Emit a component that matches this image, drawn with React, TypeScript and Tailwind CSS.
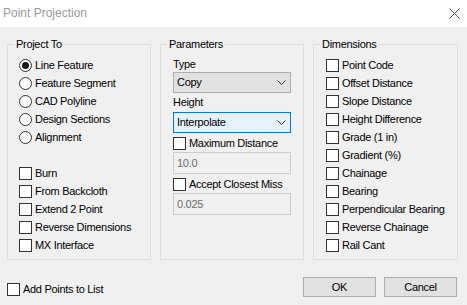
function CheckBox({ label }: { label: string }) {
  return (
    <div className="flex h-[18px] items-center gap-[3px]">
      <span className="h-[13px] w-[13px] shrink-0 border border-[#333] bg-white" />
      <span>{label}</span>
    </div>
  );
}

function Radio({ label, checked }: { label: string; checked?: boolean }) {
  return (
    <div className="flex h-[18px] items-center gap-[3px]">
      <span className="flex h-[13px] w-[13px] shrink-0 items-center justify-center rounded-full border border-[#333] bg-white">
        {checked && <span className="h-[7px] w-[7px] rounded-full bg-[#1a1a1a]" />}
      </span>
      <span>{label}</span>
    </div>
  );
}

function Chevron() {
  return (
    <svg width="9" height="5" viewBox="0 0 9 5" fill="none">
      <path d="M0.5 0.5 L4.5 4.5 L8.5 0.5" stroke="#333" strokeWidth="1" />
    </svg>
  );
}

function Select({ value, focused }: { value: string; focused?: boolean }) {
  return (
    <div
      className={
        focused
          ? "flex h-[21px] items-center justify-between border border-[#0078d7] bg-[#e5f1fb] pl-[3px] pr-[4px]"
          : "flex h-[21px] items-center justify-between border border-[#adadad] bg-[#e1e1e1] pl-[3px] pr-[4px]"
      }
    >
      <span>{value}</span>
      <Chevron />
    </div>
  );
}

function Field({ value }: { value: string }) {
  return (
    <div className="mt-[2px] flex h-[22px] items-center border border-[#cccccc] bg-[#f0f0f0] pl-[3px] text-[#6d6d6d]">
      {value}
    </div>
  );
}

function Group({
  title,
  className,
  inner,
  children,
}: {
  title: string;
  className: string;
  inner: string;
  children: React.ReactNode;
}) {
  return (
    <fieldset className={"h-[222px] border border-[#dcdcdc] " + className}>
      <legend className="ml-[6px] px-[2px] leading-[13px]">{title}</legend>
      <div className={"pt-[5px] " + inner}>{children}</div>
    </fieldset>
  );
}

export default function App() {
  return (
    <div className="h-[305px] w-[467px] overflow-hidden font-['Liberation_Sans',Arial,sans-serif] text-[11px] leading-[13px] tracking-[-0.3px] text-black">
      <div className="flex h-[27px] items-center justify-between bg-white pl-[3px] pr-[7px]">
        <span className="text-[12px] tracking-normal text-[#999]">Point Projection</span>
        <svg width="11" height="11" viewBox="0 0 11 11" fill="none">
          <path d="M0.5 0.5 L10.5 10.5 M10.5 0.5 L0.5 10.5" stroke="#555" strokeWidth="1" />
        </svg>
      </div>

      <div className="h-[278px] bg-[#f0f0f0] px-[7px] pt-[11px]">
        <div className="flex">
          <Group title="Project To" className="w-[144px]" inner="pl-[11px]">
            <Radio label="Line Feature" checked />
            <Radio label="Feature Segment" />
            <Radio label="CAD Polyline" />
            <Radio label="Design Sections" />
            <Radio label="Alignment" />
            <div className="h-[18px]" />
            <CheckBox label="Burn" />
            <CheckBox label="From Backcloth" />
            <CheckBox label="Extend 2 Point" />
            <CheckBox label="Reverse Dimensions" />
            <CheckBox label="MX Interface" />
          </Group>

          <Group title="Parameters" className="ml-[9px] w-[144px]" inner="px-[12px]">
            <div className="mt-[2px]">Type</div>
            <div className="mt-[1px]">
              <Select value="Copy" />
            </div>
            <div className="mt-[3px]">Height</div>
            <div className="mt-[3px]">
              <Select value="Interpolate" focused />
            </div>
            <div className="mt-[4px] flex h-[13px] items-center gap-[3px]">
              <span className="h-[13px] w-[13px] shrink-0 border border-[#333] bg-white" />
              <span>Maximum Distance</span>
            </div>
            <Field value="10.0" />
            <div className="mt-[4px] flex h-[13px] items-center gap-[3px]">
              <span className="h-[13px] w-[13px] shrink-0 border border-[#333] bg-white" />
              <span>Accept Closest Miss</span>
            </div>
            <Field value="0.025" />
          </Group>

          <Group title="Dimensions" className="ml-[9px] w-[145px]" inner="pl-[12px]">
            {[
              "Point Code",
              "Offset Distance",
              "Slope Distance",
              "Height Difference",
              "Grade (1 in)",
              "Gradient (%)",
              "Chainage",
              "Bearing",
              "Perpendicular Bearing",
              "Reverse Chainage",
              "Rail Cant",
            ].map((d) => (
              <CheckBox key={d} label={d} />
            ))}
          </Group>
        </div>

        <div className="mt-[17px] flex h-[20px] justify-between">
          <div className="mb-[1px] flex items-center gap-[3px] self-end">
            <span className="h-[13px] w-[13px] shrink-0 border border-[#333] bg-white" />
            <span>Add Points to List</span>
          </div>
          <div className="mr-[3px] flex gap-[8px]">
            <button className="h-[20px] w-[73px] border border-[#adadad] bg-[#e1e1e1]">OK</button>
            <button className="h-[20px] w-[73px] border border-[#adadad] bg-[#e1e1e1]">Cancel</button>
          </div>
        </div>
      </div>
    </div>
  );
}
